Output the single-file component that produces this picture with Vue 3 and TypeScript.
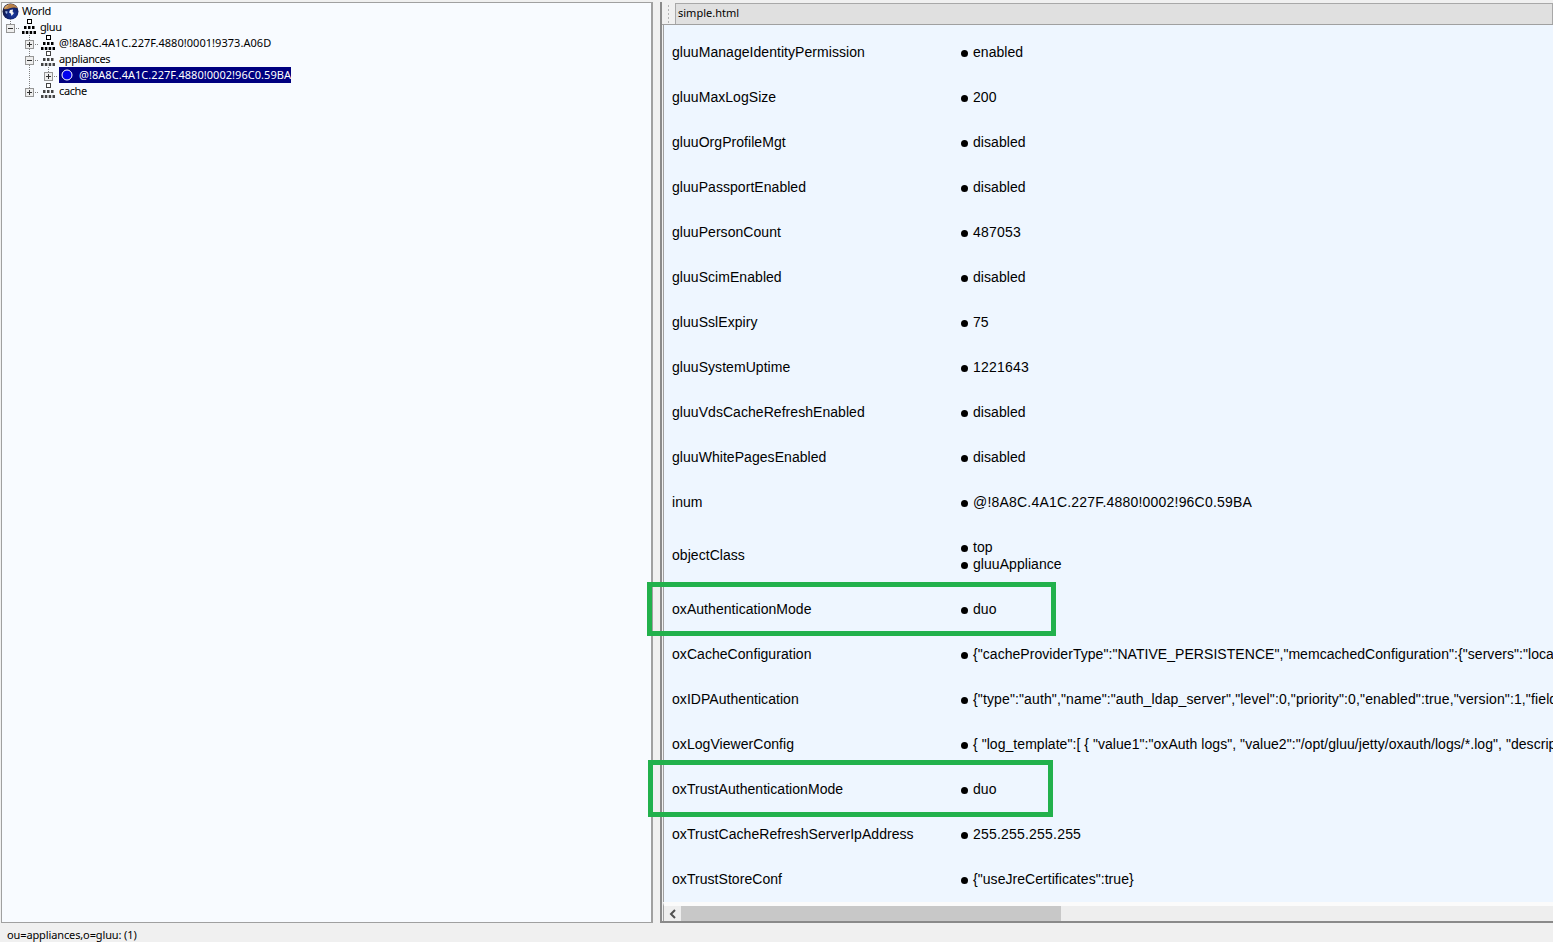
<script setup lang="ts">
type Fit = 'wide' | 'mid'
interface Attr { name: string; values: string[]; fit?: Fit }
const attrs: Attr[] = [
  { name: 'gluuManageIdentityPermission', values: ['enabled'] },
  { name: 'gluuMaxLogSize', values: ['200'] },
  { name: 'gluuOrgProfileMgt', values: ['disabled'] },
  { name: 'gluuPassportEnabled', values: ['disabled'] },
  { name: 'gluuPersonCount', values: ['487053'], fit: 'wide' },
  { name: 'gluuScimEnabled', values: ['disabled'] },
  { name: 'gluuSslExpiry', values: ['75'] },
  { name: 'gluuSystemUptime', values: ['1221643'], fit: 'wide' },
  { name: 'gluuVdsCacheRefreshEnabled', values: ['disabled'] },
  { name: 'gluuWhitePagesEnabled', values: ['disabled'] },
  { name: 'inum', values: ['@!8A8C.4A1C.227F.4880!0002!96C0.59BA'], fit: 'wide' },
  { name: 'objectClass', values: ['top', 'gluuAppliance'] },
  { name: 'oxAuthenticationMode', values: ['duo'] },
  { name: 'oxCacheConfiguration', values: ['{"cacheProviderType":"NATIVE_PERSISTENCE","memcachedConfiguration":{"servers":"localhost:11211","maxOperationQueueLength":100000}}'] },
  { name: 'oxIDPAuthentication', values: ['{"type":"auth","name":"auth_ldap_server","level":0,"priority":0,"enabled":true,"version":1,"fields":{"useSSL":true,"bindDN":"cn=directory manager"}}'], fit: 'mid' },
  { name: 'oxLogViewerConfig', values: ['{ "log_template":[ { "value1":"oxAuth logs", "value2":"/opt/gluu/jetty/oxauth/logs/*.log", "description":"oxAuth logs" } ] }'] },
  { name: 'oxTrustAuthenticationMode', values: ['duo'] },
  { name: 'oxTrustCacheRefreshServerIpAddress', values: ['255.255.255.255'], fit: 'wide' },
  { name: 'oxTrustStoreConf', values: ['{"useJreCertificates":true}'] },
]

interface Guide { x: number; to: number }
interface Node { label: string; indent: number; open: boolean; guides: Guide[]; faded?: boolean; selected?: boolean; hex?: boolean }
const nodes: Node[] = [
  { label: 'gluu', indent: 0, open: true, guides: [{ x: 10, to: 5 }] },
  { label: '@!8A8C.4A1C.227F.4880!0001!9373.A06D', indent: 19, open: false, hex: true, guides: [{ x: 29, to: 16 }] },
  { label: 'appliances', indent: 19, open: true, faded: true, guides: [{ x: 29, to: 16 }] },
  { label: '@!8A8C.4A1C.227F.4880!0002!96C0.59BA', indent: 38, open: false, hex: true, selected: true, guides: [{ x: 29, to: 16 }, { x: 48, to: 5 }] },
  { label: 'cache', indent: 19, open: false, faded: true, guides: [{ x: 29, to: 5 }] },
]
function guideDots(g: Guide): number[] {
  const ys: number[] = []
  for (let y = 0; y < g.to; y += 2) ys.push(y)
  return ys
}
const orgMid = [2, 6, 10]
const orgLow = [0, 3.83, 7.67, 11.5]
</script>

<template>
  <div class="page">
    <div class="main">
      <section class="tree-pane">
        <div class="tree-row world">
          <svg class="globe" width="17" height="17" viewBox="0 0 17 17">
            <defs>
              <radialGradient id="sea" cx="0.62" cy="0.68" r="0.65">
                <stop offset="0" stop-color="#1d3fa8" />
                <stop offset="0.6" stop-color="#10226e" />
                <stop offset="1" stop-color="#1a1a3a" />
              </radialGradient>
            </defs>
            <circle cx="8.5" cy="8.5" r="8" fill="url(#sea)" />
            <path d="M2 6 C3 2.5 6 1 9 1 C12 1 14.5 2.8 15.5 5 C13 4 10 4.4 8 5.2 C6 6 3.6 6.6 2 6 Z" fill="#b8814a" />
            <path d="M2 6 C2.6 3.6 4.6 1.8 7 1.2 C6.4 3 4.6 5 2 6 Z" fill="#d9a868" />
            <path d="M8 7 L11 6.4 L10.6 9 L12 10 L9.6 13 L8.8 10.4 L7 9.4 Z" fill="#f4f4f4" />
            <path d="M3.4 8 L5.6 8.4 L5 11 L3.6 10 Z" fill="#9cb4e4" />
          </svg>
          <span class="tree-label word">World</span>
        </div>
        <div
          v-for="n in nodes"
          :key="n.label"
          class="tree-row"
          :class="{ 'node-selected': n.selected }"
        >
          <svg class="twisty" :width="n.indent + 19" height="16">
            <g fill="#808080">
              <template v-for="g in n.guides" :key="g.x">
                <rect v-for="y in guideDots(g)" :key="y" :x="g.x" :y="y" width="1" height="1" />
              </template>
            </g>
            <g :transform="`translate(${n.indent} 0)`">
              <g fill="#808080">
                <rect x="16" y="9" width="1" height="1" />
                <rect x="18" y="9" width="1" height="1" />
              </g>
              <rect x="6.5" y="5.5" width="8" height="8" fill="#eeeeee" stroke="#969696" />
              <rect x="8" y="9" width="5" height="1" fill="#303030" />
              <rect v-if="!n.open" x="10" y="7" width="1" height="5" fill="#303030" />
            </g>
          </svg>
          <svg v-if="n.selected" class="dot-icon" width="20" height="16" viewBox="0 0 20 16">
            <rect width="20" height="16" fill="#000080" />
            <circle cx="8" cy="8" r="5" fill="#0000ee" stroke="#ffffff" />
          </svg>
          <svg v-else class="org" width="14" height="16" viewBox="0 0 14 16" :class="{ faded: n.faded }">
            <rect x="5.5" y="0.5" width="4" height="4" fill="#fff" stroke="currentColor" />
            <rect v-for="x in orgMid" :key="'m' + x" :x="x" y="7" width="2.5" height="3" fill="currentColor" />
            <rect v-for="x in orgLow" :key="'l' + x" :x="x" y="12" width="2.5" height="3" fill="currentColor" />
          </svg>
          <span class="tree-label" :class="n.hex ? 'hex' : 'word'">{{ n.label }}</span>
        </div>
      </section>

      <div class="splitter"></div>

      <section class="detail-pane">
        <header class="tabs">
          <span class="grip"></span>
          <span class="tab">simple.html</span>
        </header>
        <div class="content">
          <div v-for="a in attrs" :key="a.name" class="attr">
            <div class="attr-name" :class="{ multi: a.values.length > 1 }">{{ a.name }}</div>
            <ul class="attr-values" :class="a.fit">
              <li v-for="v in a.values" :key="v"><i class="bullet"></i>{{ v }}</li>
            </ul>
          </div>
        </div>
        <div class="hscroll">
          <span class="arrow">
            <svg width="8" height="10" viewBox="0 0 8 10"><path d="M6 1 L2 5 L6 9" fill="none" stroke="#505050" stroke-width="2" /></svg>
          </span>
          <span class="thumb"></span>
        </div>
      </section>
    </div>

    <footer class="status">ou=appliances,o=gluu: (1)</footer>

    <div class="mark mark-a"></div>
    <div class="mark mark-b"></div>
  </div>
</template>

<style scoped>
.page {
  position: relative;
  width: 1553px;
  height: 942px;
  overflow: hidden;
  background: #f0f0f0;
  display: flex;
  flex-direction: column;
  color: #000;
}
.main {
  height: 925px;
  padding: 2px 0 0 1px;
  box-sizing: border-box;
  display: flex;
  background: #f0f0f0;
}
.tree-pane {
  width: 652px;
  height: 921px;
  box-sizing: border-box;
  border: 1px solid #a0a0a0;
  border-right-width: 2px;
  background: #f8fbff;
  font: 11px Tahoma, "Noto Sans", "DejaVu Sans", sans-serif;
}
.tree-row {
  display: flex;
  align-items: center;
  height: 16px;
  line-height: 16px;
  white-space: nowrap;
}
.globe { margin-right: 3px; flex: none; }
.twisty { flex: none; margin-left: -2px; margin-right: 3px; }
.org { flex: none; color: #000; margin-right: 4px; }
.org.faded { color: #444; }
.tree-label.word { letter-spacing: -0.4px; }
.tree-label.hex { letter-spacing: 0.04px; }
.node-selected .twisty { margin-right: 2px; }
.node-selected .tree-label { background: #000080; color: #fff; height: 16px; }
.dot-icon { flex: none; }
.splitter { width: 7px; flex: none; background: #f0f0f0; }
.detail-pane {
  flex: 1;
  min-width: 0;
  height: 921px;
  box-sizing: border-box;
  border-left: 2px solid #8a8a8a;
  border-bottom: 2px solid #8a8a8a;
  display: flex;
  flex-direction: column;
  background: #f0f0f0;
}
.tabs {
  height: 23px;
  flex: none;
  display: flex;
  align-items: stretch;
  padding: 1px 0 0 3px;
  box-sizing: border-box;
  background: #f0f0f0;
  border-bottom: 1px solid #a0a0a0;
}
.grip {
  width: 3px;
  margin: 1px 5px 0 2px;
  background-image: radial-gradient(circle, #b4b4b4 1px, transparent 1px);
  background-size: 3px 4px;
}
.tab {
  flex: 1;
  background: #e0e0e0;
  border: 1px solid #a8a8a8;
  border-bottom: 0;
  padding-left: 2px;
  font: 11px/18px Tahoma, "Noto Sans", "DejaVu Sans", sans-serif;
}
.content {
  flex: none;
  height: 877px;
  margin-left: 1px;
  background: #eef6ff;
  border-left: 1px solid #a0a0a0;
  overflow: hidden;
  font: 14px/17px "Liberation Sans", Arial, sans-serif;
  padding-top: 5px;
  box-sizing: border-box;
}
.attr {
  display: flex;
  align-items: center;
  padding: 14px 0;
  white-space: nowrap;
}
.attr-name {
  width: 297px;
  padding-left: 8px;
  box-sizing: border-box;
  flex: none;
  letter-spacing: 0.05px;
}
.attr-name.multi { margin-bottom: 2px; }
.attr-values { list-style: none; margin: 0; padding: 0; letter-spacing: 0.05px; }
.attr-values.wide { letter-spacing: 0.2px; }
.attr-values.mid { letter-spacing: 0.13px; }
.attr-values li { display: flex; align-items: center; }
.bullet {
  width: 7px;
  height: 7px;
  border-radius: 50%;
  background: #000;
  margin: 2px 5px 0 0;
  flex: none;
}
.hscroll {
  flex: none;
  margin-left: 1px;
  height: 19px;
  box-sizing: border-box;
  border-top: 4px solid #fbfbfb;
  border-left: 1px solid #a0a0a0;
  display: flex;
  background: #eeeeee;
}
.arrow {
  width: 17px;
  display: flex;
  align-items: center;
  justify-content: center;
}
.thumb { width: 380px; background: #c8c8c8; }
.status {
  flex: 1;
  padding-left: 7px;
  letter-spacing: -0.12px;
  font: 11px/23px Tahoma, "Noto Sans", "DejaVu Sans", sans-serif;
  background: #f0f0f0;
}
.mark {
  position: absolute;
  box-sizing: border-box;
  border: 5px solid #22b14c;
  pointer-events: none;
}
.mark-a { left: 647px; top: 582px; width: 409px; height: 54px; }
.mark-b { left: 648px; top: 760px; width: 405px; height: 57px; }
</style>

<style>
html, body { margin: 0; background: #f0f0f0; }
</style>
